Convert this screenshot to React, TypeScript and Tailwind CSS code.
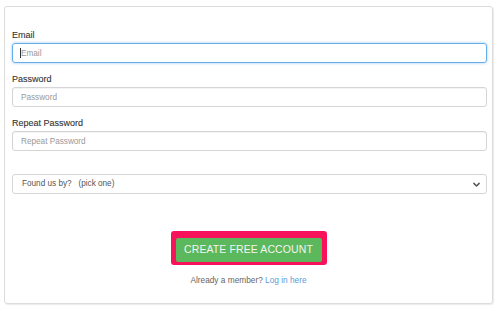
export default function App() {
  const fields = [
    { label: 'Email', placeholder: 'Email', focused: true },
    { label: 'Password', placeholder: 'Password', focused: false },
    { label: 'Repeat Password', placeholder: 'Repeat Password', focused: false },
  ];

  return (
    <div className="w-[500px] h-[311px] bg-white pt-[6px] pl-[4px] font-['Liberation_Sans',Arial,sans-serif]">
      <div className="w-[489px] h-[298px] border border-[#dcdcdc] rounded-[3px] shadow-[1px_1px_1px_rgba(0,0,0,0.08)] pt-[23px] pl-[7px] flex flex-col">
        {/* Inputs */}
        {fields.map((f) => (
          <div key={f.label} className="flex flex-col mb-[11px]">
            <label className="block h-[11px] mb-[2px] text-[9px] leading-[11px] text-[#333] [-webkit-text-stroke:0.1px_#333]">
              {f.label}
            </label>
            <div className="relative h-[20px]">
              <input
                type="text"
                placeholder={f.placeholder}
                className={
                  f.focused
                    ? 'block w-[475px] h-[20px] px-[8px] text-[8.2px] rounded-[3px] border border-[#66afe9] shadow-[0_0_3px_rgba(102,175,233,0.7)] outline-none placeholder:text-[#999]'
                    : 'block w-[475px] h-[20px] px-[8px] text-[8.2px] rounded-[3px] border border-[#d5d5d5] shadow-[inset_0_1px_1px_rgba(0,0,0,0.05)] outline-none placeholder:text-[#999]'
                }
              />
              {f.focused && (
                <span className="absolute left-[8px] top-[5px] w-px h-[10px] bg-[#333]" />
              )}
            </div>
          </div>
        ))}

        {/* Select */}
        <div className="mt-[12px] w-[475px] h-[20px] rounded-[3px] border border-[#d5d5d5] flex items-center justify-between pl-[9px] pr-[5px]">
          <span className="text-[8.2px] text-[#555] whitespace-pre">Found us by?   (pick one)</span>
          <svg className="w-[9px] h-[9px] text-[#555]" viewBox="0 0 24 24" fill="none" stroke="currentColor" strokeWidth={4} strokeLinecap="round" strokeLinejoin="round">
            <path d="M5 9l7 7 7-7" />
          </svg>
        </div>

        {/* Submit */}
        <div className="flex flex-col items-center mt-[37px] pr-[7px]">
          <div className="w-[156px] h-[34px] border-[5px] border-[#f7125b] rounded-[3px] bg-[#f7125b]">
            <button className="w-full h-full bg-[#5cb85c] rounded-[2px] text-[#f4f4f4] text-[10.5px] tracking-[0.1px]">
              CREATE FREE ACCOUNT
            </button>
          </div>
          <p className="mt-[10px] text-[8.3px] leading-[10px] text-[#666]">
            Already a member? <a className="text-[#5b9bd5]">Log in here</a>
          </p>
        </div>
      </div>
    </div>
  );
}
